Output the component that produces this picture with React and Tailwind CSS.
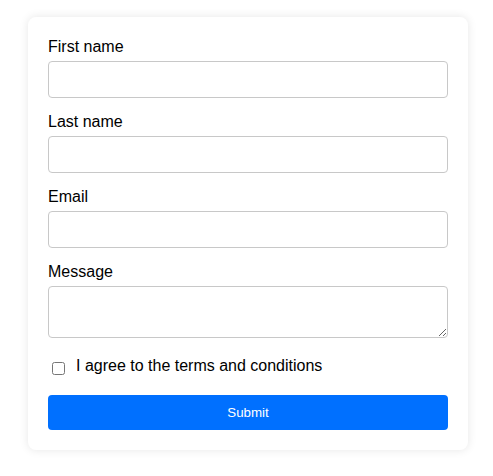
export default function App() {
  const font = { fontFamily: '"Liberation Sans", Arial, sans-serif' };
  const inputCls =
    "block w-full h-[37px] border border-[#c8c8c8] rounded-[4px] bg-white px-2 text-[13.33px] outline-none";
  return (
    <div className="min-h-[476px] bg-white pt-[17px]" style={font}>
      <form
        className="ml-[28px] w-[440px] h-[433px] bg-white rounded-[8px] p-[20px] shadow-[0_0_10px_rgba(0,0,0,0.1)] text-black"
        onSubmit={(e) => e.preventDefault()}
      >
        <div className="mb-[14px]">
          <label className="block text-[16px] leading-[19px] mb-[5px]">First name</label>
          <input type="text" className={inputCls} />
        </div>
        <div className="mb-[14px]">
          <label className="block text-[16px] leading-[19px] mb-[5px]">Last name</label>
          <input type="text" className={inputCls} />
        </div>
        <div className="mb-[14px]">
          <label className="block text-[16px] leading-[19px] mb-[5px]">Email</label>
          <input type="email" className={inputCls} />
        </div>
        <div className="mb-[14px]">
          <label className="block text-[16px] leading-[19px] mb-[5px]">Message</label>
          <textarea className="block w-full h-[52px] border border-[#c8c8c8] rounded-[4px] bg-white px-2 py-1 text-[13.33px] outline-none resize-y" />
        </div>
        <div className="h-[43px] pt-[5px] flex items-start">
          <input
            type="checkbox"
            className="w-[13px] h-[13px] mt-[5px] ml-[4px] mr-[11px] shrink-0"
          />
          <span className="text-[16px] leading-[18px]">I agree to the terms and conditions</span>
        </div>
        <button
          type="submit"
          className="block w-full h-[35px] rounded-[4px] bg-[#0070ff] text-white text-[13.33px] font-medium"
        >
          Submit
        </button>
      </form>
    </div>
  );
}
